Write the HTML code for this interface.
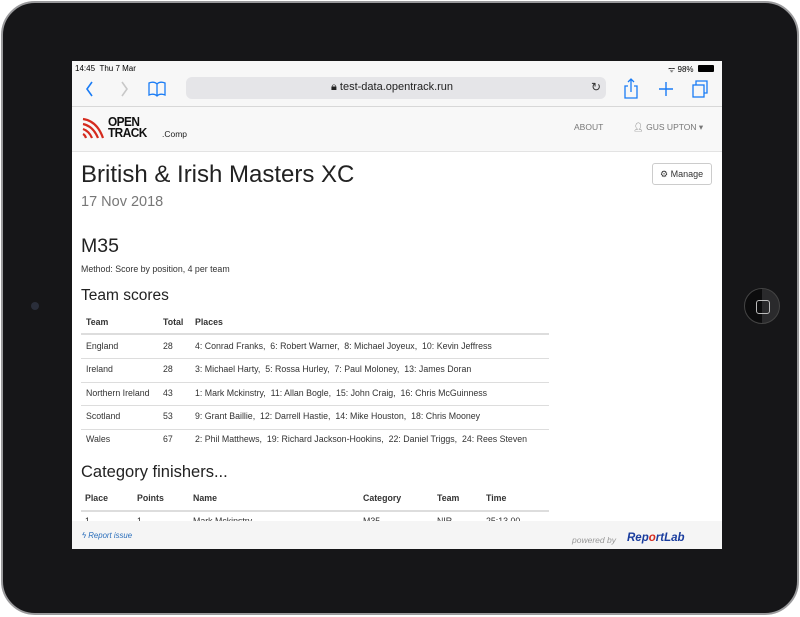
<!DOCTYPE html>
<html><head><meta charset="utf-8"><style>
*{margin:0;padding:0;box-sizing:border-box}
body{width:800px;height:617px;background:#fff;position:relative;overflow:hidden;font-family:"Liberation Sans",sans-serif;color:#333}
.frame{position:absolute;left:1px;top:1px;width:798px;height:614px;border-radius:34px;background:#161618;border:2px solid #9a9a9c}
.screen{position:absolute;left:72px;top:61px;width:650px;height:488px;background:#fff;overflow:hidden}
.a{position:absolute;white-space:nowrap}
.t{font-size:8.8px}
.h{font-size:8.8px;font-weight:bold}
.home{position:absolute;left:744px;top:288px;width:36px;height:36px;border-radius:50%;background:linear-gradient(90deg,#0c0c0d 50%,#2a2a2c 50%);border:1px solid #444}
.home:after{content:"";position:absolute;left:11px;top:11px;width:12px;height:12px;border:1.5px solid #bbb;border-radius:3px}
.cam{position:absolute;left:31px;top:302px;width:8px;height:8px;border-radius:50%;background:#2a2e3a}
.line{position:absolute;left:9px;width:468px;height:1px;background:#ddd}
</style></head><body>
<div class="frame"></div>
<div class="cam"></div>
<div class="home"></div>
<div class="screen">
 <div class="a" style="left:0;top:0;width:650px;height:46px;background:#f7f7f7;border-bottom:1px solid #d8d8d8"></div>
 <div class="a" style="left:3px;top:3px;font-size:8px;color:#000">14:45&nbsp;&nbsp;Thu 7 Mar</div>
 <div class="a" style="left:596px;top:3px;font-size:8px;color:#000">ᯤ 98%</div>
 <div class="a" style="left:626px;top:4px;width:16px;height:7px;background:#000;border-radius:1px"></div>
 <svg class="a" style="left:10px;top:17px" width="130" height="22"><path d="M10 4 L5 11 L10 18" stroke="#1a7cf5" stroke-width="1.6" fill="none"/><path d="M40 4 L45 11 L40 18" stroke="#c8c8c8" stroke-width="1.6" fill="none"/><path d="M67 5 q5-2 8 1 q3-3 8-1 v12 q-5-2-8 1 q-3-3-8-1z M75 6v12" stroke="#1a7cf5" stroke-width="1.3" fill="none"/></svg>
 <div class="a" style="left:114px;top:16px;width:420px;height:22px;background:#e5e5e8;border-radius:6px"></div>
 <div class="a" style="left:259px;top:20px;font-size:11px;color:#222">🔒︎ test-data.opentrack.run</div>
 <div class="a" style="left:519px;top:19px;font-size:12px;color:#333">↻</div>
 <svg class="a" style="left:550px;top:16px" width="95" height="24"><path d="M6 9 h-3 v12 h12 v-12 h-3 M9 2 v13 M6 5 l3-3 3 3" stroke="#1a7cf5" stroke-width="1.3" fill="none"/><path d="M44 5 v14 M37 12 h14" stroke="#1a7cf5" stroke-width="1.4"/><rect x="71" y="8" width="11" height="12" stroke="#1a7cf5" fill="none" stroke-width="1.3"/><path d="M74 8 v-4 h11 v12 h-3" stroke="#1a7cf5" fill="none" stroke-width="1.3"/></svg>
 <div class="a" style="left:0;top:46px;width:650px;height:45px;background:#f8f8f8;border-bottom:1px solid #e3e3e3"></div>
 <svg class="a" style="left:10px;top:55px" width="24" height="24"><g fill="none" stroke="#d52b1e" stroke-width="2.2"><path d="M1 3 q14 2 20 19"/><path d="M1 8 q10 2 15 14"/><path d="M1 13 q6 2 9 9"/><path d="M1 18 q2 1 3 4"/></g></svg>
 <div class="a" style="left:36px;top:56px;font-size:12.5px;font-weight:bold;line-height:11px;color:#111;letter-spacing:-.6px;transform:scaleX(.95);transform-origin:left">OPEN<br>TRACK</div>
 <div class="a" style="left:90px;top:68px;font-size:8.5px;color:#222">.Comp</div>
 <div class="a" style="left:502px;top:61px;font-size:8.5px;color:#777">ABOUT</div>
 <div class="a" style="left:561px;top:61px;font-size:8.5px;color:#777">👤︎ GUS UPTON ▾</div>
 <div class="a" style="left:9px;top:100px;font-size:24px;color:#222">British &amp; Irish Masters XC</div>
 <div class="a" style="left:9px;top:133px;font-size:14.5px;color:#777">17 Nov 2018</div>
 <div class="a" style="left:580px;top:102px;width:60px;height:22px;border:1px solid #ccc;border-radius:3px;background:#fff;font-size:9px;color:#333;padding:5px 0 0 7px">⚙ Manage</div>
 <div class="a" style="left:9px;top:174px;font-size:19.5px;color:#222">M35</div>
 <div class="a" style="left:9px;top:203px;font-size:8.8px;color:#333">Method: Score by position, 4 per team</div>
 <div class="a" style="left:9px;top:226px;font-size:15.5px;color:#222">Team scores</div>
 <div class="a h" style="left:14px;top:256px">Team</div>
 <div class="a h" style="left:91px;top:256px">Total</div>
 <div class="a h" style="left:123px;top:256px">Places</div>
 <div class="line" style="top:272px;height:2px"></div>
 <div class="a t" style="left:14px;top:280px">England</div><div class="a t" style="left:91px;top:280px">28</div><div class="a t" style="left:123px;top:280px">4: Conrad Franks,&nbsp; 6: Robert Warner,&nbsp; 8: Michael Joyeux,&nbsp; 10: Kevin Jeffress</div>
 <div class="line" style="top:297px"></div>
 <div class="a t" style="left:14px;top:303px">Ireland</div><div class="a t" style="left:91px;top:303px">28</div><div class="a t" style="left:123px;top:303px">3: Michael Harty,&nbsp; 5: Rossa Hurley,&nbsp; 7: Paul Moloney,&nbsp; 13: James Doran</div>
 <div class="line" style="top:321px"></div>
 <div class="a t" style="left:14px;top:327px">Northern Ireland</div><div class="a t" style="left:91px;top:327px">43</div><div class="a t" style="left:123px;top:327px">1: Mark Mckinstry,&nbsp; 11: Allan Bogle,&nbsp; 15: John Craig,&nbsp; 16: Chris McGuinness</div>
 <div class="line" style="top:344px"></div>
 <div class="a t" style="left:14px;top:350px">Scotland</div><div class="a t" style="left:91px;top:350px">53</div><div class="a t" style="left:123px;top:350px">9: Grant Baillie,&nbsp; 12: Darrell Hastie,&nbsp; 14: Mike Houston,&nbsp; 18: Chris Mooney</div>
 <div class="line" style="top:368px"></div>
 <div class="a t" style="left:14px;top:373px">Wales</div><div class="a t" style="left:91px;top:373px">67</div><div class="a t" style="left:123px;top:373px">2: Phil Matthews,&nbsp; 19: Richard Jackson-Hookins,&nbsp; 22: Daniel Triggs,&nbsp; 24: Rees Steven</div>
 <div class="a" style="left:9px;top:402px;font-size:16.5px;color:#222">Category finishers...</div>
 <div class="a h" style="left:13px;top:432px">Place</div>
 <div class="a h" style="left:65px;top:432px">Points</div>
 <div class="a h" style="left:121px;top:432px">Name</div>
 <div class="a h" style="left:291px;top:432px">Category</div>
 <div class="a h" style="left:365px;top:432px">Team</div>
 <div class="a h" style="left:414px;top:432px">Time</div>
 <div class="line" style="top:449px;height:2px"></div>
 <div class="a t" style="left:13px;top:455px">1</div><div class="a t" style="left:65px;top:455px">1</div><div class="a t" style="left:121px;top:455px">Mark Mckinstry</div><div class="a t" style="left:291px;top:455px">M35</div><div class="a t" style="left:365px;top:455px">NIR</div><div class="a t" style="left:414px;top:455px">25:13.00</div>
 <div class="a" style="left:0;top:460px;width:650px;height:28px;background:#f5f5f5"></div>
 <div class="a" style="left:10px;top:470px;font-size:7.8px;font-style:italic;color:#2a6ebb">ϟ Report issue</div>
 <div class="a" style="left:500px;top:474px;font-size:8.5px;font-style:italic;color:#999">powered by</div>
 <div class="a" style="left:555px;top:471px;font-size:11.5px;font-style:italic;font-weight:bold;color:#1a3d9e">Rep<span style="color:#d52b1e">o</span>rtLab</div>
</div>
</body></html>
